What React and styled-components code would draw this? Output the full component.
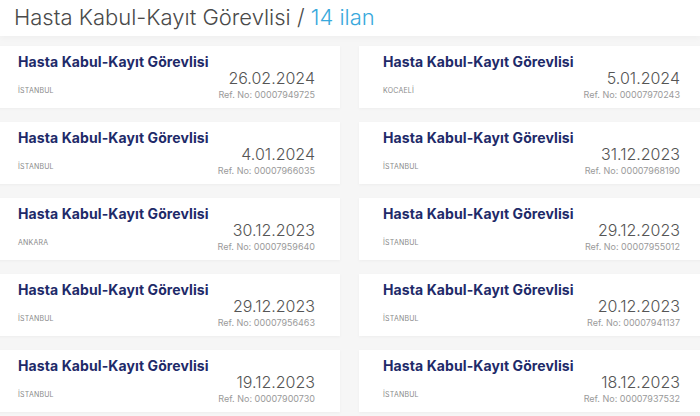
import styled, { createGlobalStyle } from "styled-components";

const GlobalStyle = createGlobalStyle`
  html, body {
    margin: 0;
    padding: 0;
    background: #f6f6f6;
    overflow: hidden;
    font-family: Inter, "Noto Sans", "Liberation Sans", sans-serif;
  }
`;

const ads = [
  { date: "26.02.2024", ref: "00007949725", city: "İSTANBUL" },
  { date: "5.01.2024", ref: "00007970243", city: "KOCAELİ" },
  { date: "4.01.2024", ref: "00007966035", city: "İSTANBUL" },
  { date: "31.12.2023", ref: "00007968190", city: "İSTANBUL" },
  { date: "30.12.2023", ref: "00007959640", city: "ANKARA" },
  { date: "29.12.2023", ref: "00007955012", city: "İSTANBUL" },
  { date: "29.12.2023", ref: "00007956463", city: "İSTANBUL" },
  { date: "20.12.2023", ref: "00007941137", city: "İSTANBUL" },
  { date: "19.12.2023", ref: "00007900730", city: "İSTANBUL" },
  { date: "18.12.2023", ref: "00007937532", city: "İSTANBUL" },
];

export default function App() {
  return (
    <Page>
      <GlobalStyle />
      <Header>
        Hasta Kabul-Kayıt Görevlisi / <Count>14 ilan</Count>
      </Header>
      <Grid>
        {ads.map((ad, i) => (
          <Card key={i}>
            <Left>
              <Title>Hasta Kabul-Kayıt Görevlisi</Title>
              <City>{ad.city}</City>
            </Left>
            <Right>
              <Date>{ad.date}</Date>
              <Ref>Ref. No: {ad.ref}</Ref>
            </Right>
          </Card>
        ))}
      </Grid>
    </Page>
  );
}

const Page = styled.div`
  width: 100%;
  height: 416px;
  overflow: hidden;
`;

const Header = styled.div`
  height: 36px;
  background: #fff;
  padding-left: 14px;
  font-size: 22px;
  font-weight: 300;
  line-height: 34px;
  color: #4a4a4a;
  box-shadow: 0 2px 6px rgba(0, 0, 0, 0.03);
`;

const Count = styled.span`
  color: #39a9dc;
`;

const Grid = styled.div`
  display: grid;
  grid-template-columns: 346px 346px;
  column-gap: 19px;
  row-gap: 14px;
  margin-left: -6px;
  padding-top: 10px;
`;

const Card = styled.div`
  height: 62px;
  background: #fff;
  display: flex;
  justify-content: space-between;
  padding: 0 25px 0 24px;
  box-shadow: 0 1px 3px rgba(0, 0, 0, 0.04);
`;

const Left = styled.div`
  display: flex;
  flex-direction: column;
  padding-top: 7px;
`;

const Title = styled.div`
  font-size: 14px;
  font-weight: 700;
  color: #1e2a69;
  letter-spacing: 0.1px;
`;

const City = styled.div`
  margin-top: 16px;
  font-size: 7px;
  color: #8a8a8a;
  letter-spacing: 0.2px;
`;

const Right = styled.div`
  display: flex;
  flex-direction: column;
  align-items: flex-end;
  padding-top: 23px;
`;

const Date = styled.div`
  font-size: 16px;
  font-weight: 300;
  color: #555;
  line-height: 18px;
`;

const Ref = styled.div`
  margin-top: 2px;
  font-size: 9px;
  color: #9a9a9a;
`;
